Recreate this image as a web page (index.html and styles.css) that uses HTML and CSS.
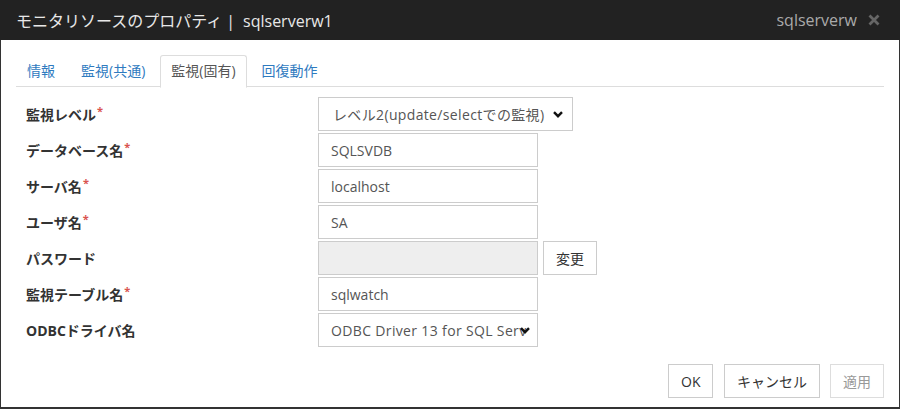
FILE: index.html
```html
<!DOCTYPE html>
<html lang="ja">
<head>
  <meta charset="UTF-8" />
  <title>モニタリソースのプロパティ</title>
  <link rel="stylesheet" href="styles.css">
</head>
<body>
  <div class="dialog">
    <div class="dialog-header">
      <span class="dialog-title">モニタリソースのプロパティ<span class="sep">|</span>sqlserverw1</span>
      <span class="dialog-server">sqlserverw</span>
      <span class="dialog-close">
        <svg width="12" height="12" viewBox="0 0 12 12"><path d="M1.5 1.5 L10.5 10.5 M10.5 1.5 L1.5 10.5" stroke="#666" stroke-width="2.8" stroke-linecap="butt"/></svg>
      </span>
    </div>

    <div class="dialog-body">
      <ul class="tabs">
        <li><a href="#">情報</a></li>
        <li><a href="#">監視(共通)</a></li>
        <li class="active"><a href="#">監視(固有)</a></li>
        <li><a href="#">回復動作</a></li>
      </ul>

      <div class="form">
        <label class="form-label">監視レベル<span class="req">*</span></label>
        <div class="form-field">
          <div class="select-wrap wide">
            <select class="control">
              <option>レベル2(update/selectでの監視)</option>
            </select>
            <svg class="chevron" width="10" height="7" viewBox="0 0 10 7"><polyline points="1,1.2 5,5.2 9,1.2" fill="none" stroke="#111" stroke-width="2.4"/></svg>
          </div>
        </div>

        <label class="form-label">データベース名<span class="req">*</span></label>
        <div class="form-field"><input class="control" type="text" value="SQLSVDB"></div>

        <label class="form-label">サーバ名<span class="req">*</span></label>
        <div class="form-field"><input class="control" type="text" value="localhost"></div>

        <label class="form-label">ユーザ名<span class="req">*</span></label>
        <div class="form-field"><input class="control" type="text" value="SA"></div>

        <label class="form-label">パスワード</label>
        <div class="form-field">
          <input class="control" type="password" value="" disabled>
          <button class="btn btn-change">変更</button>
        </div>

        <label class="form-label">監視テーブル名<span class="req">*</span></label>
        <div class="form-field"><input class="control" type="text" value="sqlwatch"></div>

        <label class="form-label">ODBCドライバ名</label>
        <div class="form-field">
          <div class="select-wrap">
            <select class="control">
              <option>ODBC Driver 13 for SQL Server</option>
            </select>
            <svg class="chevron" width="10" height="7" viewBox="0 0 10 7"><polyline points="1,1.2 5,5.2 9,1.2" fill="none" stroke="#111" stroke-width="2.4"/></svg>
          </div>
        </div>
      </div>

      <div class="dialog-footer">
        <button class="btn btn-ok">OK</button>
        <button class="btn btn-cancel">キャンセル</button>
        <button class="btn btn-apply" disabled>適用</button>
      </div>
    </div>
  </div>
</body>
</html>
```

FILE: styles.css
```css
body {
  margin: 0;
  font-family: "Open Sans", "Noto Sans CJK JP", sans-serif;
  background: #fff;
  color: #333;
}

.dialog {
  width: 900px;
  height: 409px;
  box-sizing: border-box;
  border: 1px solid #333;
  border-top: none;
  border-bottom: 2px solid #333;
  background: #fff;
  display: flex;
  flex-direction: column;
}

.dialog-header {
  height: 40px;
  background: #222;
  display: flex;
  align-items: center;
  box-sizing: border-box;
  margin: 0 -1px;
  padding: 0 20px 0 16px;
}

.dialog-title {
  color: #e8e8e8;
  font-size: 16px;
  flex-grow: 1;
}

.dialog-title .sep {
  margin: 0 8px 0 4px;
}

.dialog-server {
  color: #aaa;
  font-size: 16px;
  margin-right: 11px;
}

.dialog-close {
  display: flex;
  align-items: center;
}

.dialog-body {
  padding: 15px 15px 0 15px;
  display: flex;
  flex-direction: column;
}

.tabs {
  list-style: none;
  margin: 0;
  padding: 0;
  display: flex;
  border-bottom: 1px solid #ddd;
  height: 31px;
}

.tabs li {
  margin-right: 4px;
}

.tabs a {
  display: block;
  padding: 5px 10px 6px 10px;
  font-size: 14px;
  line-height: 20px;
  color: #2f7bbf;
  text-decoration: none;
  border: 1px solid transparent;
  border-radius: 3px 3px 0 0;
}

.tabs .active a {
  color: #555;
  border-color: #ddd;
  border-bottom-color: #fff;
  background: #fff;
}

.form {
  display: grid;
  grid-template-columns: 292px 1fr;
  row-gap: 2px;
  margin-top: 10px;
  padding-left: 10px;
}

.form-label {
  font-size: 14px;
  font-weight: bold;
  color: #333;
  display: flex;
  align-items: center;
  height: 34px;
}

.req {
  color: #d9534f;
  font-size: 11px;
  align-self: flex-start;
  margin-top: 6px;
  margin-left: 1px;
}

.form-field {
  display: flex;
  align-items: center;
  gap: 5px;
}

.control {
  width: 220px;
  height: 34px;
  box-sizing: border-box;
  border: 1px solid #ccc;
  border-radius: 0;
  padding: 0 12px;
  font-family: "Open Sans", "Noto Sans CJK JP", sans-serif;
  font-size: 14px;
  color: #555;
  background: #fff;
  outline: none;
}

input.control[disabled] {
  background: #eee;
}

.select-wrap {
  position: relative;
}

.select-wrap .control {
  appearance: none;
  -webkit-appearance: none;
  padding-right: 10px;
  padding-left: 12px;
  letter-spacing: 0.35px;
}

.select-wrap.wide .control {
  width: 255px;
  padding-left: 14px;
}

.chevron {
  position: absolute;
  right: 8px;
  top: 14px;
  pointer-events: none;
}

.select-wrap.wide .chevron {
  right: 10px;
}

.btn {
  height: 34px;
  box-sizing: border-box;
  border: 1px solid #ccc;
  background: #fff;
  color: #333;
  font-family: "Open Sans", "Noto Sans CJK JP", sans-serif;
  font-size: 14px;
  padding: 0 12px;
  border-radius: 0;
  cursor: pointer;
}

.btn-change {
  width: 54px;
}

.btn[disabled] {
  color: #999;
  border-color: #ddd;
  cursor: default;
}

.dialog-footer {
  display: flex;
  justify-content: flex-end;
  gap: 10px;
  margin-top: 17px;
}

.btn-ok {
  width: 45px;
  margin-right: 1px;
}

.btn-cancel {
  width: 96px;
}

.btn-apply {
  width: 54px;
}
```
